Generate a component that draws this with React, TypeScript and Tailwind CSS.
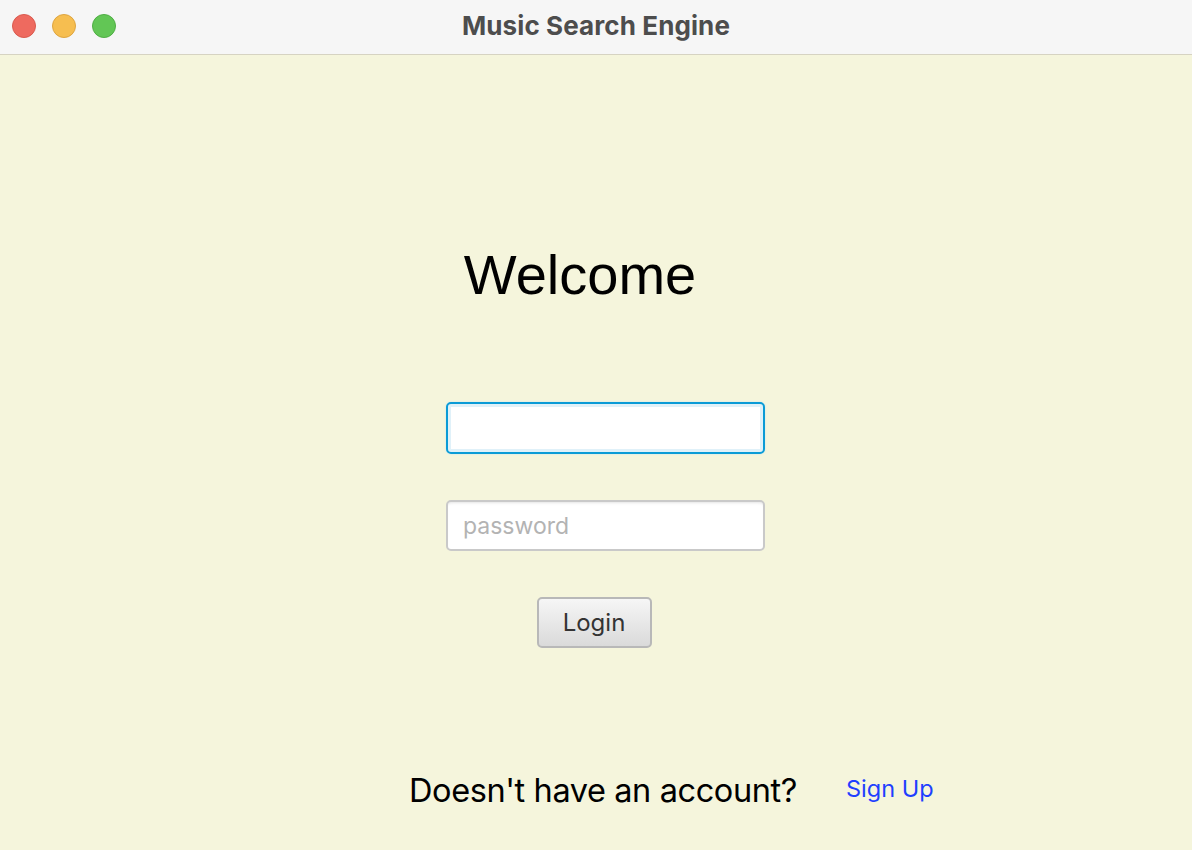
import React from 'react';

export default function App() {
  return (
    <div className="flex h-[850px] w-[1192px] flex-col overflow-hidden bg-[#f5f5dc]">
      {/* Title bar */}
      <div className="relative flex h-[55px] shrink-0 items-center justify-center border-b border-[#d6d3c2] bg-[#f6f6f6] pb-[3px]">
        <div className="absolute left-[12px] top-[14px] flex gap-[16px]">
          <div className="h-[24px] w-[24px] rounded-full border border-[#d95a4e] bg-[#ee6a5f]" />
          <div className="h-[24px] w-[24px] rounded-full border border-[#dea540] bg-[#f6be50]" />
          <div className="h-[24px] w-[24px] rounded-full border border-[#4fae44] bg-[#62c655]" />
        </div>
        <span className="font-['Inter',sans-serif] text-[26px] font-bold tracking-[0.1px] text-[#4d4d4d]">
          Music Search Engine
        </span>
      </div>

      {/* Content */}
      <div className="flex flex-1 flex-col items-center pt-[192px]">
        <h1 className="mr-[32px] font-['Liberation_Sans',Arial,sans-serif] text-[56px] leading-none text-black">
          Welcome
        </h1>

        <input
          type="text"
          className="ml-[19px] mt-[99px] h-[52px] w-[319px] rounded-[5px] border-2 border-[#0a9bd6] bg-white px-[15px] font-['Inter',sans-serif] text-[24px] shadow-[inset_0_0_0_3px_#e0f1f9,0_0_2px_#bfe3f2] outline-none"
        />

        <input
          type="password"
          placeholder="password"
          className="ml-[19px] mt-[46px] h-[51px] w-[319px] rounded-[5px] border-2 border-[#c9c9c9] bg-white px-[15px] font-['Inter',sans-serif] text-[23px] text-[#333] shadow-[inset_0_3px_3px_-2px_#e4e4e4] outline-none placeholder:text-[#b3b3b3]"
        />

        <button className="mr-[4px] mt-[46px] h-[51px] w-[115px] rounded-[5px] border-2 border-[#b8b8b8] bg-gradient-to-b from-[#f6f6f6] to-[#dadada] font-['Inter',sans-serif] text-[24px] text-[#333]">
          Login
        </button>

        <div className="mt-[127px] flex items-baseline self-stretch pl-[409px]">
          <span className="font-['Inter',sans-serif] text-[32.5px] leading-none tracking-[-0.4px] text-black">
            Doesn't have an account?
          </span>
          <a className="ml-[49px] -translate-y-[5px] font-['Inter',sans-serif] text-[23.5px] leading-none text-[#1f3fff]">
            Sign Up
          </a>
        </div>
      </div>
    </div>
  );
}
